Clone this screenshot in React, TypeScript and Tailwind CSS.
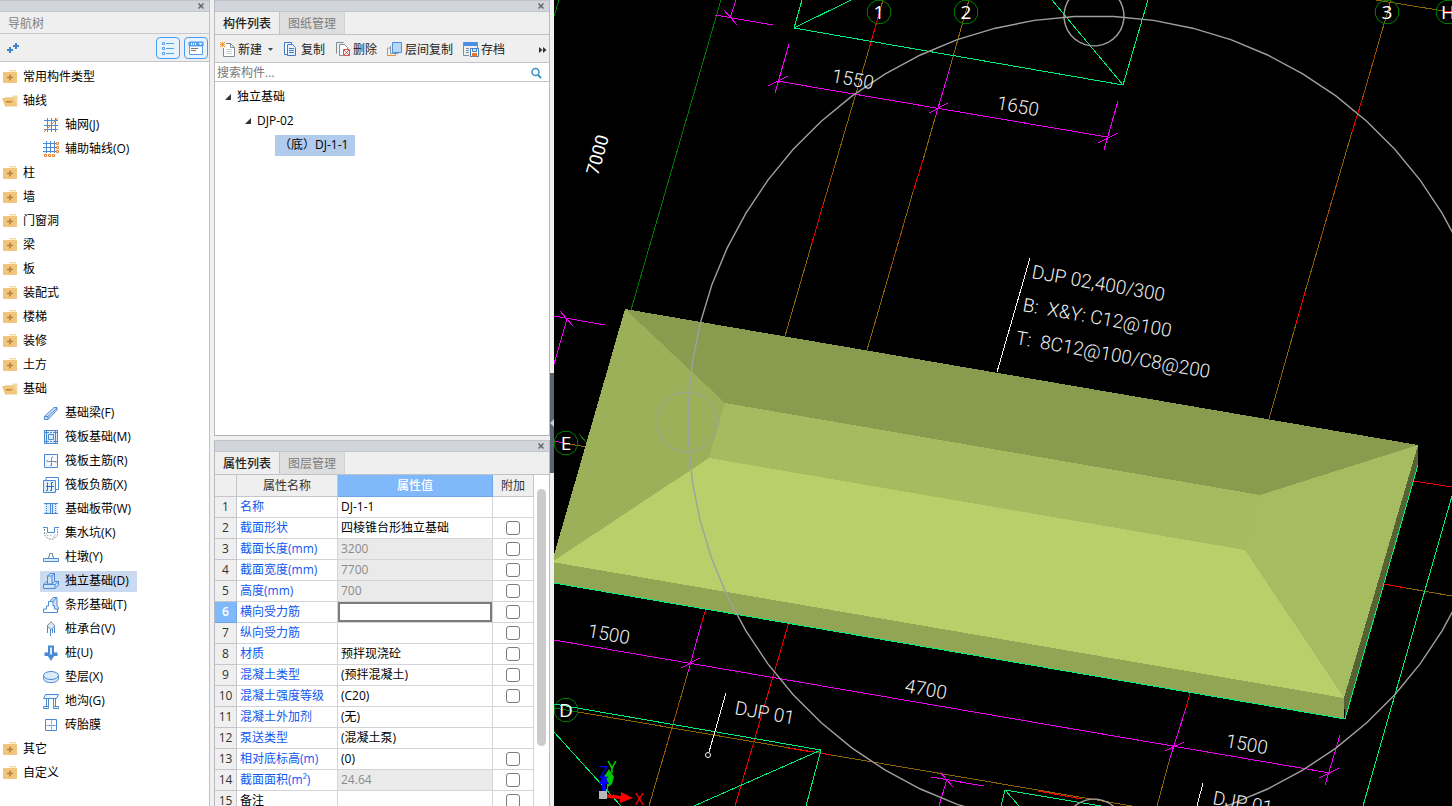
import { useState } from 'react';
import type { ReactNode } from 'react';

interface NavItem {
  label: string;
  icon: string;
}

interface NavGroup {
  label: string;
  children?: NavItem[];
}

interface PropertyRow {
  name: string;
  value: string;
  extra: boolean;
  readOnly?: boolean;
  plain?: boolean;
}

type Point = [number, number];

const navGroups: NavGroup[] = [
  { label: '常用构件类型' },
  {
    label: '轴线',
    children: [
      { label: '轴网(J)', icon: 'grid' },
      { label: '辅助轴线(O)', icon: 'auxGrid' },
    ],
  },
  { label: '柱' },
  { label: '墙' },
  { label: '门窗洞' },
  { label: '梁' },
  { label: '板' },
  { label: '装配式' },
  { label: '楼梯' },
  { label: '装修' },
  { label: '土方' },
  {
    label: '基础',
    children: [
      { label: '基础梁(F)', icon: 'beam' },
      { label: '筏板基础(M)', icon: 'raft' },
      { label: '筏板主筋(R)', icon: 'mainBar' },
      { label: '筏板负筋(X)', icon: 'negBar' },
      { label: '基础板带(W)', icon: 'strip' },
      { label: '集水坑(K)', icon: 'sump' },
      { label: '柱墩(Y)', icon: 'pier' },
      { label: '独立基础(D)', icon: 'isolated' },
      { label: '条形基础(T)', icon: 'stripBase' },
      { label: '桩承台(V)', icon: 'pileCap' },
      { label: '桩(U)', icon: 'pile' },
      { label: '垫层(X)', icon: 'cushion' },
      { label: '地沟(G)', icon: 'trench' },
      { label: '砖胎膜', icon: 'brick' },
    ],
  },
  { label: '其它' },
  { label: '自定义' },
];

const properties: PropertyRow[] = [
  { name: '名称', value: 'DJ-1-1', extra: false },
  { name: '截面形状', value: '四棱锥台形独立基础', extra: true },
  { name: '截面长度(mm)', value: '3200', extra: true, readOnly: true },
  { name: '截面宽度(mm)', value: '7700', extra: true, readOnly: true },
  { name: '高度(mm)', value: '700', extra: true, readOnly: true },
  { name: '横向受力筋', value: '', extra: true },
  { name: '纵向受力筋', value: '', extra: true },
  { name: '材质', value: '预拌现浇砼', extra: true },
  { name: '混凝土类型', value: '(预拌混凝土)', extra: true },
  { name: '混凝土强度等级', value: '(C20)', extra: true },
  { name: '混凝土外加剂', value: '(无)', extra: false },
  { name: '泵送类型', value: '(混凝土泵)', extra: false },
  { name: '相对底标高(m)', value: '(0)', extra: true },
  { name: '截面面积(m²)', value: '24.64', extra: true, readOnly: true },
  { name: '备注', value: '', extra: true, plain: true },
];

const icons: Record<string, ReactNode> = {
  grid: (
    <>
      <path d="M1 3.5h14M1 8.5h14M1 12.5h14M4.5 1v14M8.5 1v14M12.5 1v14" />
      <path d="M1 15L15 1" stroke="#ee8130" />
    </>
  ),
  auxGrid: (
    <>
      <path d="M0 2.5h13M0 6.5h13M0 10.5h13M3.5 0v12M7.5 0v12M11.5 0v12" />
      <path d="M13.5 1.5h2v2h-2zM13.5 5.5h2v2h-2zM13.5 9.5h2v2h-2zM1.5 13.5h2v2h-2zM5.5 13.5h2v2h-2zM9.5 13.5h2v2h-2z" stroke="#ee8130" />
    </>
  ),
  beam: (
    <path d="M1.5 11.5L11 2.5h3V5L5 14.5H1.5zM1.5 11.5H5v3M5 11.5L14 3" fill="#cfe1f6" />
  ),
  raft: (
    <>
      <path d="M1.5 1.5h13v13h-13z" fill="#dce9f8" />
      <path d="M5.5 5.5h5v5h-5zM3.5 1.5v13M12.5 1.5v13M1.5 3.5h13M1.5 12.5h13" />
      <path d="M6 3.5h1M9 3.5h1M6 12.5h1M9 12.5h1" stroke="#fff" />
    </>
  ),
  mainBar: (
    <>
      <path d="M1.5 1.5h13v13h-13z" fill="#f4f8fd" />
      <path d="M4 8.5h9M8.5 13V5.500Q8.500 4 10 4M4 8.500V7M13 8.500V10M7 12.500h1.500" stroke="#7c8f9c" />
    </>
  ),
  negBar: (
    <>
      <path d="M3 3V.5h12.500v12H13" fill="#fff" />
      <path d="M.5 3.500h12v12H.5z" fill="#e3eefb" />
      <path d="M4.500 5.500v8H3M8.500 5.500v8H7M3 9.500h8M10 5.500H8.500" stroke="#2f6fc0" />
    </>
  ),
  strip: (
    <>
      <path d="M1.500 3h13v10h-13z" fill="#dce9f8" stroke="none" />
      <path d="M1 2.500h14M1 12.500h14M7.500 3v10M9.500 3v10" />
      <path d="M3.500 3v10M12.500 3v10" strokeDasharray="1 1" />
    </>
  ),
  sump: (
    <>
      <path d="M0 2.500h4.500v5h7v-5H16" />
      <path d="M1.500 4v6l4 4h5l4-4V4" strokeDasharray="2 1" stroke="#7c8f9c" />
      <path d="M3 8l2 3 3-1 3 2 2-4" strokeDasharray="1 2" stroke="#7c8f9c" />
    </>
  ),
  pier: (
    <>
      <path d="M.5 9.500h15v3H.5z" fill="#dce9f8" />
      <path d="M5.500 9V7.500h1v-3h3v3h1V9" stroke="#7c8f9c" fill="#fff" />
    </>
  ),
  isolated: (
    <>
      <path d="M.5 11.500L4 8.500h11.500v3.500l-3.500 3.500H.5z" fill="#cfe1f6" />
      <path d="M.5 11.500H12v4M12 11.500l3.500-3" />
      <path d="M4.500 11V3L7 .5h4.500v8L9 11z" fill="#cfe1f6" />
      <path d="M4.500 3H9v8M9 3L11.500.5" />
    </>
  ),
  stripBase: (
    <>
      <path d="M6.500 5L10 .5h4V9l2 2-3 4" fill="#cfe1f6" />
      <path d="M.5 15.500V12h3V9h2V4.500h4.500V9h1.500v3h3v3.500z" fill="#fff" />
      <path d="M10 4.500l3.500-4" />
    </>
  ),
  pileCap: (
    <>
      <path d="M8 .8L12 5 8 8.500 4 5z" fill="#dce9f8" stroke="#7c8f9c" />
      <path d="M4.500 6v6M7.500 8v7M11.500 6v6M9.500 8v4" />
    </>
  ),
  pile: (
    <>
      <path d="M2.500 7.500v2.500h3l2.500 4 2.500-4h3V7.500" fill="#4a8ad4" strokeWidth="2" />
      <path d="M6 1.500h4v9H6z" fill="#dce9f8" strokeWidth="2" />
    </>
  ),
  cushion: (
    <>
      <path d="M.5 6.500v3C.5 15 15.500 15 15.500 9.500v-3" fill="#dce9f8" />
      <ellipse cx="8" cy="6.500" rx="7.500" ry="4" fill="#dce9f8" />
    </>
  ),
  trench: (
    <path d="M2.500 1.500h13l-2 4H.5zM3.500 5.500v8M5.500 5.500v8M10.500 5.500v8M12.500 5.500v8M.5 13.500h5v2h-5zM10.500 13.500h5v2h-5z" fill="#eaf2fb" />
  ),
  brick: (
    <>
      <path d="M2.500 2.500h11v11h-11z" fill="#fff" />
      <path d="M3 8.500h10M8.500 3v10" stroke="#8fb8e8" />
      <path d="M6 8.500h1M10 8.500h1" stroke="#2f6fc0" />
    </>
  ),
};

const ItemIcon = ({ name }: { name: string }) => (
  <svg viewBox="0 0 16 16" className="h-4 w-4 shrink-0" fill="none" stroke="#4a8ad4" aria-hidden="true">
    {icons[name]}
  </svg>
);

const FolderIcon = ({ open }: { open: boolean }) => (
  <svg viewBox="0 0 16 14" className="h-[14px] w-4 shrink-0" aria-hidden="true">
    {open ? (
      <>
        <path d="M3 3h7l1-1.500h4.500V12H5z" fill="#f3d9a0" />
        <path d="M0 4h12.500l2.500 8.500H3z" fill="#efc67e" />
        <path d="M4 7h6v1.500H4z" fill="#c0872c" />
      </>
    ) : (
      <>
        <path d="M8 0h6v1.500H7z" fill="#f3d9a0" />
        <path d="M1 2h14v11H1z" fill="#efc67e" />
        <path d="M5 6.700h2.200V4.500h1.600v2.200H11v1.600H8.800V10.500H7.200V8.300H5z" fill="#b98430" />
      </>
    )}
  </svg>
);

const PanelBar = ({ label }: { label: string }) => (
  <div className="flex h-3 shrink-0 items-center justify-end border-y border-[#c3c4cb] bg-[#d3d5dc] pr-1">
    <button type="button" aria-label={label} className="flex h-2 w-2 items-center justify-center">
      <svg viewBox="0 0 8 8" className="h-2 w-2" stroke="#666" strokeWidth="1.5" aria-hidden="true">
        <path d="M1.500 1.500l5 5M6.500 1.500l-5 5" />
      </svg>
    </button>
  </div>
);

const PanelTabs = ({ tabs }: { tabs: string[] }) => (
  <div role="tablist" className="flex h-[23px] shrink-0 border-b border-[#c0c2c9] bg-[#efefef]">
    {tabs.map((tab, i) => (
      <button
        key={tab}
        type="button"
        role="tab"
        aria-selected={i === 0}
        className={
          i === 0
            ? 'border-r border-[#c0c2c9] px-2 pt-0.5 font-medium text-[#222]'
            : 'border-r border-[#d0d2d8] bg-[#dedede] px-2 pt-0.5 text-[#7d7d7d]'
        }
      >
        {tab}
      </button>
    ))}
  </div>
);

const NavigationTree = () => {
  const [selected, setSelected] = useState('独立基础(D)');

  return (
    <nav className="flex w-[210px] shrink-0 flex-col border-r border-[#c0c1c5] bg-white">
      <PanelBar label="关闭导航树" />
      <h2 className="flex h-[22px] shrink-0 items-center border-b border-[#c6c7cb] bg-[#efefef] pt-0.5 pl-2 text-[#808080]">导航树</h2>
      <div className="flex h-7 shrink-0 items-center gap-1 border-b border-[#c6c7cb] bg-[#efefef] pr-px pl-[6px]">
        <button type="button" aria-label="添加" className="mr-auto">
          <svg viewBox="0 0 14 14" className="h-[14px] w-[14px]" stroke="#3d85d0" strokeWidth="2" aria-hidden="true">
            <path d="M1 9h6M4 6v6M7 5h6M10 2v6" />
          </svg>
        </button>
        <button type="button" aria-label="列表" className="flex h-[22px] w-6 items-center justify-center rounded border border-[#4a9cf0] bg-[#e9f3fd]">
          <svg viewBox="0 0 14 14" className="h-[14px] w-[14px]" fill="none" stroke="#55a0ea" aria-hidden="true">
            <path d="M1.500 1.500h2v2h-2zM1.500 6.500h2v2h-2zM1.500 11.500h2v2h-2zM5 2.500h8M5 7.500h8M5 12.500h8" />
          </svg>
        </button>
        <button type="button" aria-label="窗口" className="flex h-[22px] w-6 items-center justify-center rounded border border-[#4a9cf0] bg-[#e9f3fd]">
          <svg viewBox="0 0 16 14" className="h-[14px] w-4" fill="none" stroke="#55a0ea" aria-hidden="true">
            <path d="M1.500 1.500h13v12h-13z" fill="#fff" />
            <path d="M1 1h14v4H1z" fill="#55a0ea" />
            <path d="M3.500 2v2M5.500 2v2M7.500 2v2M11 2.500h3M12.500 2v2" stroke="#fff" />
            <path d="M3 7.500h7M3 9.500h5" stroke="#777" />
          </svg>
        </button>
      </div>
      <ul className="min-h-0 flex-1 overflow-hidden pt-[3px]">
        {navGroups.map((group) => (
          <li key={group.label}>
            <button type="button" className="flex h-6 items-center gap-[5px] pl-0.5">
              <FolderIcon open={!!group.children} />
              <span>{group.label}</span>
            </button>
            {group.children && (
              <ul>
                {group.children.map((item) => (
                  <li key={item.label} className="flex h-6 items-center pl-10">
                    <button
                      type="button"
                      onClick={() => setSelected(item.label)}
                      className={`flex h-[21px] items-center gap-1.5 pr-2 pl-[3px] ${item.label === selected ? 'bg-[#c9daf1]' : ''}`}
                    >
                      <ItemIcon name={item.icon} />
                      <span>{item.label}</span>
                    </button>
                  </li>
                ))}
              </ul>
            )}
          </li>
        ))}
      </ul>
    </nav>
  );
};

const ToolButton = ({ label, children }: { label: string; children: ReactNode }) => (
  <button type="button" className="flex items-center gap-0.5 text-[#222]">
    <svg viewBox="0 0 16 16" className="h-4 w-4" fill="none" aria-hidden="true">
      {children}
    </svg>
    {label}
  </button>
);

const TreeArrow = () => (
  <svg viewBox="0 0 6 6" className="h-1.5 w-1.5" aria-hidden="true">
    <path d="M6 0v6H0z" fill="#333" />
  </svg>
);

const ComponentList = () => (
  <section className="flex h-[436px] shrink-0 flex-col border-x border-[#b8babf]">
    <PanelBar label="关闭构件列表" />
    <PanelTabs tabs={['构件列表', '图纸管理']} />
    <div className="flex h-7 shrink-0 items-center gap-2.5 border-b border-[#c0c2c9] bg-[#efefef] pt-0.5 pr-0.5 pl-[5px]">
      <div className="flex items-center gap-1.5">
        <ToolButton label="新建">
          <path d="M3.500 1.500h7l4 4v9h-11z" fill="#fff" stroke="#7f8c95" />
          <path d="M10.500 1.500v4h4" stroke="#7f8c95" />
          <path d="M6 7.500h6M6 9.500h6M6 11.500h6" stroke="#c5ccd1" />
          <path d="M0 0h6v6H0z" fill="#efefef" />
          <path d="M0 .5h1M4 .5h1M1 1.500h3M0 2.500h5M1 3.500h3M0 4.500h1M4 4.500h1M2.500 0v5" stroke="#f2a33a" />
        </ToolButton>
        <svg viewBox="0 0 5 3" className="h-[3px] w-[5px]" aria-hidden="true">
          <path d="M0 0h5L2.500 3z" fill="#444" />
        </svg>
      </div>
      <ToolButton label="复制">
        <path d="M1.500.5h7v12h-7z" fill="#fff" stroke="#3a7cc8" />
        <path d="M4.500 2.500h5l3 3v8h-8z" fill="#e9f2fc" stroke="#3a7cc8" />
        <path d="M6 6.500h5M6 8.500h5M6 10.500h5" stroke="#3a7cc8" />
      </ToolButton>
      <ToolButton label="删除">
        <path d="M1.500 11.500v-11h7" stroke="#7f8c95" />
        <path d="M8 13.500H4.500v-11h5l3 3V8" fill="#fff" stroke="#7f8c95" />
        <path d="M8.500 7.500h6v6h-6zM9 8l5 5M14 8l-5 5" stroke="#d9534f" />
      </ToolButton>
      <ToolButton label="层间复制">
        <path d="M.5 6v7.500h8V12M.5 6H3" stroke="#e8893a" />
        <path d="M3.500 4v7.500h8" stroke="#8b97a0" />
        <path d="M5.500.5h9v10h-9z" fill="#b8d8fb" stroke="#4b90e0" />
      </ToolButton>
      <ToolButton label="存档">
        <path d="M.5.5h14v3H.5z" fill="#4b90e0" stroke="#4b90e0" />
        <path d="M.5 4v9.500H6M14.500 4v2M3 6.500h3M3 8.500h3M3 10.500h3" stroke="#7f8c95" />
        <path d="M7.500 6.500h8v8h-8z" fill="#fff" stroke="#3a7cc8" />
        <path d="M9.500 6.500h4v3h-4z" fill="#d6e6f8" stroke="#3a7cc8" />
        <path d="M9 11h5v3.500H9z" fill="#e8792a" />
      </ToolButton>
      <button type="button" aria-label="更多" className="ml-auto">
        <svg viewBox="0 0 8 6" className="h-1.5 w-2" aria-hidden="true">
          <path d="M0 0l3.500 3L0 6zM4 0l3.500 3L4 6z" fill="#333" />
        </svg>
      </button>
    </div>
    <div className="flex h-[19px] shrink-0 items-center border-b border-[#c0c2c9] bg-white pt-px pr-[7px] pl-0.5">
      <input
        type="text"
        aria-label="搜索构件"
        placeholder="搜索构件..."
        className="h-4 min-w-0 flex-1 bg-transparent outline-none placeholder:text-[#777]"
      />
      <button type="button" aria-label="搜索">
        <svg viewBox="0 0 12 12" className="h-3 w-3" fill="none" stroke="#3f8fc8" aria-hidden="true">
          <circle cx="5.500" cy="5" r="3.500" strokeWidth="1.500" />
          <path d="M8 8l3 3" strokeWidth="2" />
        </svg>
      </button>
    </div>
    <ul className="min-h-0 flex-1 border-b border-[#b0b2b6] bg-white pt-[3px] text-black">
      <li>
        <button type="button" className="flex h-6 items-center gap-1.5 pl-[10px]">
          <TreeArrow />
          独立基础
        </button>
        <ul>
          <li>
            <button type="button" className="flex h-6 items-center gap-1.5 pl-[30px]">
              <TreeArrow />
              DJP-02
            </button>
            <ul>
              <li className="flex h-6 items-center pl-[60px]">
                <button type="button" className="h-[21px] bg-[#b1cbec] pr-[7px] pl-1">
                  （底）DJ-1-1
                </button>
              </li>
            </ul>
          </li>
        </ul>
      </li>
    </ul>
  </section>
);

const PropertyList = () => {
  const [activeRow, setActiveRow] = useState(5);

  return (
    <section className="mt-1 flex min-h-0 flex-1 flex-col border-x border-[#b8babf] bg-white">
      <PanelBar label="关闭属性列表" />
      <PanelTabs tabs={['属性列表', '图层管理']} />
      <div className="flex min-h-0 flex-1 overflow-hidden">
        <table className="h-fit flex-1 table-fixed border-separate border-spacing-0">
          <colgroup>
            <col className="w-[22px]" />
            <col className="w-[101px]" />
            <col />
            <col className="w-[41px]" />
          </colgroup>
          <thead>
            <tr className="h-[22px] text-[#333]">
              <th aria-label="序号" className="border-r border-b border-[#c4c6cc] bg-[#efefef]" />
              <th className="border-r border-b border-[#c4c6cc] bg-[#efefef] p-0 font-normal">属性名称</th>
              <th className="border-r border-b border-[#6ba6ea] bg-[#80b9fb] p-0 font-medium text-white">属性值</th>
              <th className="border-r border-b border-[#c4c6cc] bg-[#efefef] p-0 font-normal">附加</th>
            </tr>
          </thead>
          <tbody>
            {properties.map((row, i) => (
              <tr key={row.name} className="h-[21px]" onClick={() => setActiveRow(i)}>
                <th
                  scope="row"
                  className={
                    i === activeRow
                      ? 'border-r border-b border-[#6ba6ea] bg-[#80b9fb] p-0 font-semibold text-white'
                      : 'border-r border-b border-[#c4c6cc] bg-[#efefef] p-0 font-normal text-[#333]'
                  }
                >
                  {i + 1}
                </th>
                <td className={`border-r border-b border-[#d3d4d7] p-0 pl-[3px] whitespace-nowrap ${row.plain ? 'text-black' : 'text-[#1157f0]'}`}>
                  {row.name}
                </td>
                <td
                  className={`border-r border-b border-[#d3d4d7] p-0 whitespace-nowrap ${row.readOnly ? 'bg-[#eaeaea] text-[#8a8a8a]' : 'text-black'}`}
                >
                  {i === activeRow ? (
                    <input
                      type="text"
                      aria-label={row.name}
                      defaultValue={row.value}
                      className="block h-5 w-full border-2 border-[#7c7c7c] bg-white px-px outline-none"
                    />
                  ) : (
                    <span className="pl-[3px]">{row.value}</span>
                  )}
                </td>
                <td className="border-r border-b border-[#d3d4d7] p-0">
                  {row.extra && (
                    <input
                      type="checkbox"
                      aria-label={`${row.name}附加`}
                      className="mx-auto block h-[14px] w-[14px] appearance-none rounded-[3px] border border-[#7c7c7c] bg-white checked:bg-[#80b9fb]"
                    />
                  )}
                </td>
              </tr>
            ))}
          </tbody>
        </table>
        <div className="w-[15px] shrink-0 px-[3px] pt-[14px]">
          <div className="h-[257px] rounded-full bg-[#cbcbcb]" />
        </div>
      </div>
    </section>
  );
};

const ringPoints = (cx: number, cy: number, r: number, sides: number) =>
  Array.from({ length: sides }, (_, i) => {
    const a = ((i + 0.5) / sides) * Math.PI * 2;
    return `${(cx + r * Math.cos(a)).toFixed(1)},${(cy + r * Math.sin(a)).toFixed(1)}`;
  }).join(' ');

const Lines = ({ color, items }: { color: string; items: [Point, Point][] }) => (
  <g stroke={color} shapeRendering="crispEdges">
    {items.map(([a, b], i) => (
      <line key={i} x1={a[0]} y1={a[1]} x2={b[0]} y2={b[1]} />
    ))}
  </g>
);

const axisBrown: [Point, Point][] = [
  [[883, 0], [879, 14]],
  [[869, 49], [835, 165]],
  [[812, 243], [785, 336]],
  [[969, 0], [949, 71]],
  [[935, 118], [923, 160]],
  [[913, 192], [867, 350]],
  [[1391, 0], [1362, 100]],
  [[1352, 132], [1305, 292]],
  [[1296, 324], [1269, 419]],
  [[1376, 0], [1444, 11]],
  [[569, 444], [587, 447]],
  [[687, 676], [649, 806]],
  [[1170, 758], [1157, 806]],
  [[578, 712], [1132, 806]],
  [[1406, 588], [1452, 596]],
];

const axisOrange: [Point, Point][] = [
  [[835, 165], [823, 205]],
  [[905, 220], [890, 271]],
  [[1378, 45], [1362, 100]],
  [[1338, 180], [1320, 241]],
  [[680, 700], [664, 755]],
];

const axisRed: [Point, Point][] = [
  [[879, 14], [869, 49]],
  [[823, 205], [812, 243]],
  [[923, 160], [913, 192]],
  [[1362, 100], [1352, 132]],
  [[1305, 292], [1296, 324]],
  [[1444, 11], [1452, 12]],
  [[706, 609], [701, 625]],
  [[789, 622], [735, 806]],
  [[1190, 693], [1186, 708]],
  [[788, 748], [831, 755]],
  [[1038, 791], [1082, 799]],
  [[1413, 481], [1452, 487]],
  [[1384, 584], [1406, 588]],
];

const dimensionLines: [Point, Point][] = [
  [[715, 15], [773, 25]],
  [[736, 0], [730, 18]],
  [[724, 10], [737, 25]],
  [[777, 81], [1107, 137]],
  [[789, 44], [775, 93]],
  [[768, 86], [788, 76]],
  [[949, 71], [935, 118]],
  [[929, 113], [948, 103]],
  [[1118, 101], [1104, 150]],
  [[1098, 143], [1118, 133]],
  [[554, 316], [605, 325]],
  [[567, 319], [554, 364]],
  [[560, 311], [573, 326]],
  [[554, 441], [569, 444]],
  [[554, 640], [1330, 773]],
  [[701, 625], [687, 676]],
  [[681, 668], [700, 658]],
  [[1186, 708], [1170, 758]],
  [[1165, 751], [1184, 742]],
  [[1340, 735], [1325, 785]],
  [[1319, 778], [1339, 768]],
  [[931, 777], [984, 786]],
  [[947, 779], [939, 806]],
  [[940, 772], [953, 787]],
];

const outlineLines: [Point, Point][] = [
  [[802, 0], [794, 28]],
  [[794, 28], [851, 0]],
  [[794, 28], [1123, 85]],
  [[1123, 85], [1052, 0]],
  [[1123, 85], [1148, 0]],
  [[1452, 496], [1363, 806]],
  [[554, 704], [821, 750]],
  [[821, 750], [694, 806]],
  [[821, 750], [806, 806]],
  [[554, 732], [621, 806]],
  [[1001, 806], [1005, 790]],
  [[1005, 790], [1101, 806]],
  [[1005, 790], [1019, 806]],
];

const axisMarks = [
  { label: '1', x: 879, y: 12 },
  { label: '2', x: 966, y: 12 },
  { label: '3', x: 1387, y: 12 },
  { label: 'H', x: 1448, y: 12 },
  { label: 'E', x: 566, y: 443 },
  { label: 'D', x: 566, y: 710 },
];

const annotations = [
  { text: '1550', x: 831, y: 82 },
  { text: '1650', x: 996, y: 109 },
  { text: '1500', x: 587, y: 637 },
  { text: '4700', x: 904, y: 692 },
  { text: '1500', x: 1225, y: 747 },
  { text: 'DJP 02,400/300', x: 1031, y: 278 },
  { text: 'B:  X&Y: C12@100', x: 1022, y: 311 },
  { text: 'T:  8C12@100/C8@200', x: 1015, y: 344 },
  { text: 'DJP 01', x: 734, y: 714 },
  { text: 'DJP 01', x: 1212, y: 804 },
];

const ModelView = () => (
  <main className="min-w-0 flex-1 overflow-hidden bg-black">
    <svg
      viewBox="554 0 898 806"
      preserveAspectRatio="xMinYMin slice"
      className="block h-full w-full font-['Roboto',sans-serif]"
      role="img"
      aria-label="独立基础三维视图"
    >
      <Lines color="#007a00" items={[[[721, 0], [631, 310]], [[559, 0], [554, 16]], [[579, 434], [587, 443]], [[554, 708], [578, 712]]]} />
      <Lines color="#8c6400" items={axisBrown} />
      <Lines color="#a04c00" items={axisOrange} />
      <Lines color="#f00000" items={axisRed} />
      <Lines color="#f000f0" items={dimensionLines} />
      <Lines color="#00f07c" items={outlineLines} />

      {/* foundation body */}
      <g shapeRendering="crispEdges">
        <path d="M1418 445V466L1345 719 1344 698z" fill="#566233" />
        <path d="M552 562L1344 698V719L552 583z" fill="#92a554" />
        <path d="M625 309L1418 445 1260 495 725 403z" fill="#889b4f" />
        <path d="M625 309L725 403 709 458 552 562z" fill="#9cb05a" />
        <path d="M725 403L1260 495 1245 550 709 458z" fill="#a5bb5f" />
        <path d="M1418 445L1344 698 1245 550 1260 495z" fill="#a6bc60" />
        <path d="M552 562L709 458 1245 550 1344 698z" fill="#b7d069" />
      </g>
      <Lines color="#00f07c" items={[[[554, 583], [1345, 719]], [[1345, 719], [1418, 465]]]} />

      <g fill="none" stroke="#a0a0a0" strokeWidth="1.400">
        <polygon points={ringPoints(1094, 422, 406, 64)} />
        <polygon points={ringPoints(1094, 16, 30, 32)} />
        <polygon points={ringPoints(687, 422, 30, 32)} strokeWidth="1" />
        <polygon points={ringPoints(1094, 829, 30, 32)} />
      </g>

      <Lines color="#f4f4f4" items={[[[1030, 258], [997, 372]], [[726, 693], [709, 752]], [[1203, 783], [1197, 806]]]} />
      <circle cx="708" cy="755" r="2.500" fill="none" stroke="#fff" />

      <g fill="#f0f0f0" fontSize="19" fontWeight="300">
        {annotations.map((a) => (
          <text key={`${a.x}-${a.y}`} transform={`translate(${a.x} ${a.y}) rotate(10)`} className="whitespace-pre">
            {a.text}
          </text>
        ))}
      </g>
      <text transform="translate(598 176) rotate(-74)" fontSize="18" fill="#fff">
        7000
      </text>

      {axisMarks.map((m) => (
        <g key={m.label}>
          <polygon points={ringPoints(m.x, m.y, 12, 12)} fill="none" stroke="#008000" />
          <text x={m.x} y={m.y + 7} textAnchor="middle" fontSize="19" fill="#fff" className="font-['Open_Sans',sans-serif]">
            {m.label}
          </text>
        </g>
      ))}

      {/* orientation gizmo */}
      <path d="M607 792V779l-4-1 6-9 5 8-2 7-4 3v5z" fill="#00c800" />
      <path d="M602 792v-8h-3l5-10 5 10h-3v8z" fill="#0000ff" />
      <path d="M607 794l14 2v-4l12 6-13 5v-4l-13-1z" fill="#ff0000" />
      <path d="M599 791h8v8h-8z" fill="#b8b8b8" />
      <g fontSize="16" textAnchor="middle" className="font-['Open_Sans',sans-serif]">
        <text x="604" y="778" fill="#0000ff">Z</text>
        <text x="612" y="773" fill="#00e000">Y</text>
        <text x="639" y="805" fill="#ff0000">X</text>
      </g>
    </svg>
  </main>
);

const App = () => (
  <div className="flex h-screen overflow-hidden bg-[#f0f0f0] font-['Open_Sans','Noto_Sans_CJK_SC',sans-serif] text-[12px] leading-4 text-black">
    <NavigationTree />
    <div className="ml-1 flex w-[336px] shrink-0 flex-col">
      <ComponentList />
      <PropertyList />
    </div>
    <div className="flex w-1 shrink-0 flex-col pt-[373px]">
      <button type="button" aria-label="收起面板" className="flex h-[100px] w-1 items-center bg-[#5d6472]">
        <svg viewBox="0 0 4 8" className="h-2 w-1" aria-hidden="true">
          <path d="M4 0v8L0 4z" fill="#c8ccd4" />
        </svg>
      </button>
    </div>
    <ModelView />
  </div>
);

export default App;
